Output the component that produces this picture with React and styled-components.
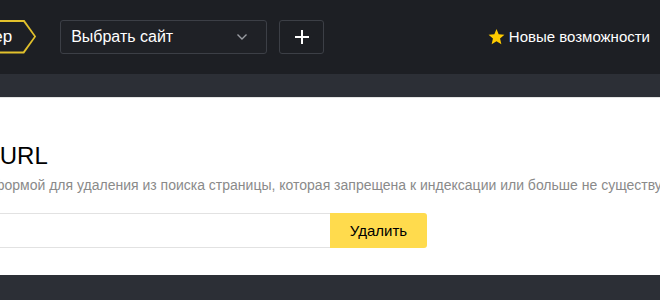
import React from "react";
import styled, { createGlobalStyle } from "styled-components";

const Global = createGlobalStyle`
  html, body {
    margin: 0;
    padding: 0;
    background: #2c2f36;
    overflow: hidden;
  }
  body {
    font-family: "Liberation Sans", Arial, sans-serif;
  }
`;

const Page = styled.div`
  width: 660px;
  height: 300px;
  display: flex;
  flex-direction: column;
  background: #2c2f36;
  overflow: hidden;
`;

const Header = styled.header`
  height: 74px;
  flex-shrink: 0;
  background: #1d1f24;
  display: flex;
  align-items: center;
  padding-right: 10px;
`;

const LeftGroup = styled.div`
  display: flex;
  align-items: center;
  margin-left: -86px;
  margin-top: -1px;
`;

const Tag = styled.span`
  display: inline-flex;
  background: #e2c12c;
  padding: 2px;
  clip-path: polygon(0 0, calc(100% - 12px) 0, 100% 50%, calc(100% - 12px) 100%, 0 100%);
`;

const TagInner = styled.span`
  display: inline-flex;
  align-items: center;
  height: 30px;
  padding: 0 22px 0 10px;
  background: #1d1f24;
  color: #fff;
  font-size: 17px;
  clip-path: polygon(0 0, calc(100% - 11px) 0, 100% 50%, calc(100% - 11px) 100%, 0 100%);
`;

const Select = styled.div`
  margin-left: 24px;
  width: 207px;
  height: 34px;
  box-sizing: border-box;
  border: 1px solid #3c3f46;
  border-radius: 3px;
  background: #1f2126;
  display: flex;
  align-items: center;
  justify-content: space-between;
  padding: 0 18px 0 10px;
  color: #fff;
  font-size: 16px;
`;

const IconButton = styled.div`
  margin-left: 12px;
  width: 45px;
  height: 34px;
  box-sizing: border-box;
  border: 1px solid #3c3f46;
  border-radius: 3px;
  display: flex;
  align-items: center;
  justify-content: center;
`;

const News = styled.div`
  margin-left: auto;
  display: flex;
  align-items: center;
  gap: 4px;
  color: #fff;
  font-size: 15px;
  margin-top: -1px;
`;

const SubBar = styled.div`
  height: 23px;
  flex-shrink: 0;
  background: #2c2f36;
`;

const Card = styled.section`
  height: 178px;
  flex-shrink: 0;
  box-sizing: border-box;
  background: #fff;
  border-top: 1px solid #e4e4e4;
  overflow: hidden;
`;

const CardInner = styled.div`
  margin-left: -115px;
  padding-top: 44px;
`;

const Title = styled.h1`
  margin: 0;
  font-size: 24px;
  line-height: 28px;
  font-weight: 400;
  color: #000;
`;

const Desc = styled.p`
  margin: 6px 0 0;
  font-size: 14px;
  line-height: 18px;
  color: #8a8a8a;
  white-space: nowrap;
`;

const Form = styled.div`
  display: flex;
  margin-top: 19px;
`;

const Input = styled.div`
  width: 445px;
  height: 35px;
  box-sizing: border-box;
  border: 1px solid #e2e2e2;
  border-right: none;
  background: #fff;
`;

const Button = styled.button`
  width: 97px;
  height: 35px;
  border: none;
  border-radius: 0 3px 3px 0;
  background: #ffdb4d;
  color: #000;
  font-family: inherit;
  font-size: 15px;
  padding: 0;
`;

const Footer = styled.div`
  flex: 1;
  background: #2c2f36;
`;

const App = () => {
  return (
    <Page>
      <Global />
      <Header>
        <LeftGroup>
          <Tag>
            <TagInner>Вебмастер</TagInner>
          </Tag>
          <Select>
            Выбрать сайт
            <svg width="12" height="8" viewBox="0 0 12 8">
              <path d="M1.5 1.5 L6 6 L10.5 1.5" fill="none" stroke="#9a9ca2" strokeWidth="1.4" />
            </svg>
          </Select>
          <IconButton>
            <svg width="14" height="14" viewBox="0 0 14 14">
              <path d="M7 0 V14 M0 7 H14" stroke="#fff" strokeWidth="2" />
            </svg>
          </IconButton>
        </LeftGroup>
        <News>
          <svg width="17" height="16" viewBox="0 0 24 23">
            <path
              d="M12 0 L15.1 7.6 L23.4 8.3 L17.1 13.7 L19 21.8 L12 17.5 L5 21.8 L6.9 13.7 L0.6 8.3 L8.9 7.6 Z"
              fill="#ffcc00"
            />
          </svg>
          Новые возможности
        </News>
      </Header>
      <SubBar />
      <Card>
        <CardInner>
          <Title>Удаление URL</Title>
          <Desc>
            Воспользуйтесь формой для удаления из поиска страницы, которая запрещена к индексации или больше не существует.
          </Desc>
          <Form>
            <Input />
            <Button>Удалить</Button>
          </Form>
        </CardInner>
      </Card>
      <Footer />
    </Page>
  );
};

export default App;
